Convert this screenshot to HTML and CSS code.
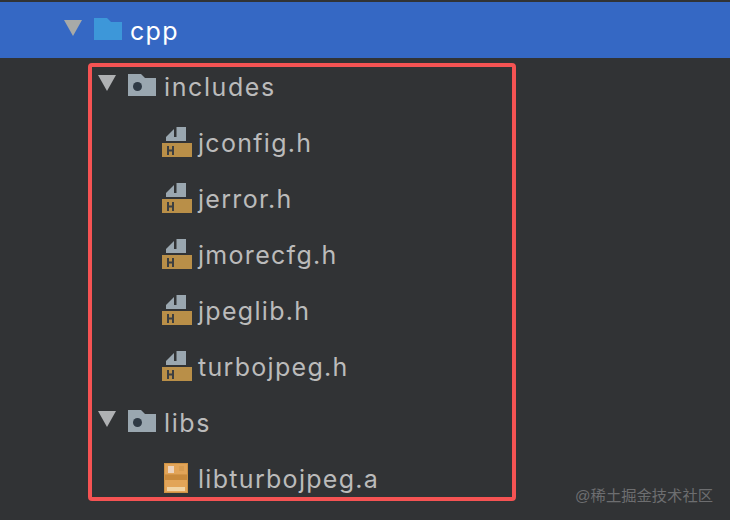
FILE: index.html
```html
<!DOCTYPE html>
<html lang="en">
  <head>
    <meta charset="UTF-8" />
    <title>Project tree</title>
    <link rel="stylesheet" href="styles.css">
  </head>
  <body>
    <svg class="sprites" width="0" height="0">
      <symbol id="folder" viewBox="0 0 28 22">
        <path d="M0 0H13L17 4H28V22H0Z" />
      </symbol>
      <symbol id="header" viewBox="0 0 30 30">
        <path fill="#9aa7b0" d="M4 10L12 2V10Z" />
        <path fill="#9aa7b0" d="M14.5 0H24V14H4V10H14.5Z" />
        <rect y="16" width="30" height="14" fill="#b98f48" />
        <path fill="#3c3f41" d="M5 19H7V22.5H10V19H12V28H10V24.5H7V28H5Z" />
      </symbol>
    </svg>

    <div class="tree">
      <div class="tree__row tree__row--selected tree__row--level0">
        <span class="tree__arrow"></span>
        <svg class="tree__folder tree__folder--blue"><use href="#folder" /></svg>
        <span class="tree__name tree__name--selected">cpp</span>
      </div>

      <div class="tree__row tree__row--level1">
        <span class="tree__arrow"></span>
        <svg class="tree__folder"><use href="#folder" /></svg>
        <span class="tree__dot"></span>
        <span class="tree__name">includes</span>
      </div>
      <div class="tree__row tree__row--level2">
        <svg class="tree__file"><use href="#header" /></svg>
        <span class="tree__name">jconfig.h</span>
      </div>
      <div class="tree__row tree__row--level2">
        <svg class="tree__file"><use href="#header" /></svg>
        <span class="tree__name">jerror.h</span>
      </div>
      <div class="tree__row tree__row--level2">
        <svg class="tree__file"><use href="#header" /></svg>
        <span class="tree__name">jmorecfg.h</span>
      </div>
      <div class="tree__row tree__row--level2">
        <svg class="tree__file"><use href="#header" /></svg>
        <span class="tree__name">jpeglib.h</span>
      </div>
      <div class="tree__row tree__row--level2">
        <svg class="tree__file"><use href="#header" /></svg>
        <span class="tree__name">turbojpeg.h</span>
      </div>

      <div class="tree__row tree__row--level1">
        <span class="tree__arrow"></span>
        <svg class="tree__folder"><use href="#folder" /></svg>
        <span class="tree__dot"></span>
        <span class="tree__name">libs</span>
      </div>
      <div class="tree__row tree__row--level2">
        <svg class="tree__archive" viewBox="0 0 24 30">
          <rect width="24" height="30" fill="#e2a458" />
          <rect x="0.5" y="0.5" width="23" height="29" fill="none" stroke="#cf9344" />
          <rect x="4" y="3" width="6" height="7" fill="#ecd3bd" />
          <rect x="15" y="3" width="5" height="5" fill="#d89c50" />
          <rect x="1" y="11" width="22" height="1" fill="#d39548" />
          <rect x="1" y="12" width="22" height="5" fill="#c98a3c" />
          <rect x="3" y="24" width="18" height="4" fill="#f0d3a4" />
        </svg>
        <span class="tree__name">libturbojpeg.a</span>
      </div>
    </div>

    <div class="highlight"></div>
    <p class="watermark">@稀土掘金技术社区</p>
  </body>
</html>
```

FILE: styles.css
```css
* {
  box-sizing: border-box;
  margin: 0;
  padding: 0;
}

html,
body {
  width: 730px;
  height: 520px;
  overflow: hidden;
}

body {
  position: relative;
  background-color: #313335;
  font-family: "Inter", "Liberation Sans", sans-serif;
}

.sprites {
  position: absolute;
}

.tree {
  padding-top: 2px;
}

.tree__row {
  display: flex;
  align-items: center;
  height: 56px;
}

.tree__row--selected {
  background-color: #3568c4;
}

.tree__row--level0 {
  padding-left: 64px;
}

.tree__row--level1 {
  padding-left: 98px;
}

.tree__row--level2 {
  padding-left: 162px;
}

.tree__arrow {
  width: 0;
  height: 0;
  margin-top: -6px;
  border-left: 9px solid transparent;
  border-right: 9px solid transparent;
  border-top: 16px solid #afb1b3;
}

.tree__row--selected .tree__arrow {
  margin-top: -4px;
  border-top-color: #a8aaa8;
}

.tree__folder {
  flex-shrink: 0;
  width: 28px;
  height: 22px;
  margin-left: 12px;
  margin-top: -3px;
  fill: #9aa7b0;
}

.tree__folder--blue {
  fill: #3d97d9;
}

.tree__dot {
  width: 9px;
  height: 9px;
  margin-left: -23px;
  margin-right: 14px;
  margin-top: 1px;
  border-radius: 50%;
  background-color: #2f3a45;
}

.tree__file {
  flex-shrink: 0;
  width: 30px;
  height: 30px;
}

.tree__archive {
  flex-shrink: 0;
  width: 24px;
  height: 30px;
  margin-left: 2px;
  margin-right: 4px;
}

.tree__name {
  margin-left: 6px;
  margin-top: 2px;
  color: #bbbbbb;
  font-size: 25px;
  letter-spacing: 1.3px;
  white-space: nowrap;
}

.tree__folder + .tree__name {
  margin-left: 8px;
}

.tree__dot + .tree__name {
  margin-left: 8px;
  letter-spacing: 1.6px;
}

.tree__name--selected {
  color: #ffffff;
}

.highlight {
  position: absolute;
  left: 88px;
  top: 63px;
  width: 428px;
  height: 438px;
  border: 4px solid #f55353;
  border-radius: 4px;
}

.watermark {
  position: absolute;
  right: 17px;
  bottom: 15px;
  color: #6d6e70;
  font-family: "Liberation Sans", "Noto Sans CJK SC", sans-serif;
  font-size: 15.3px;
  white-space: nowrap;
}
```
